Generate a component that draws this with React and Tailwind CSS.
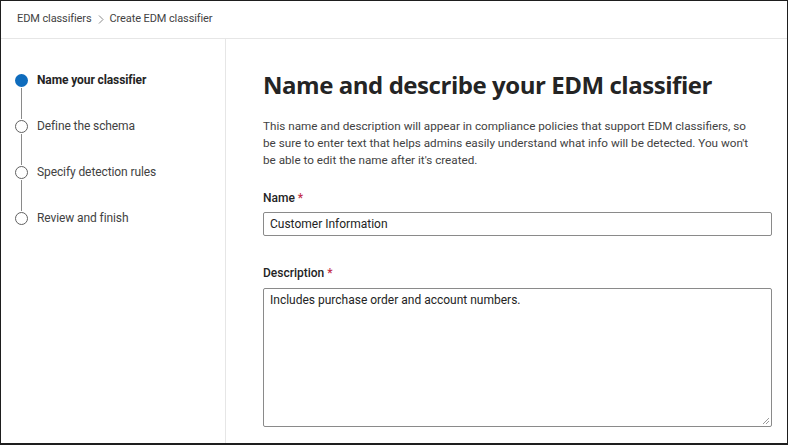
const steps = [
  { label: "Name your classifier", active: true },
  { label: "Define the schema" },
  { label: "Specify detection rules" },
  { label: "Review and finish" },
];

function Step({ label, active, last }) {
  return (
    <div className="flex">
      <div className="flex flex-col items-center w-[13px]">
        <div
          className={
            active
              ? "w-[13px] h-[13px] rounded-full bg-[#0f6cbd]"
              : "w-[13px] h-[13px] rounded-full border border-[#616161] bg-white"
          }
        />
        {!last && <div className="w-px h-[31px] my-[1px] bg-[#8a8a8a]" />}
      </div>
      <div
        className={`ml-[9px] -mt-[3px] text-[12px] leading-[18px] tracking-[-0.1px] ${
          active ? "font-bold text-[#242424]" : "text-[#424242]"
        }`}
      >
        {label}
      </div>
    </div>
  );
}

export default function App() {
  return (
    <div
      className="w-[788px] h-[445px] bg-white border-[#1e1e1e] border-l border-t border-r border-b-2 flex flex-col overflow-hidden"
      style={{ fontFamily: "Roboto, 'Open Sans', sans-serif" }}
    >
      {/* breadcrumb */}
      <header className="h-[38px] flex-shrink-0 border-b border-[#e6e6e6] flex items-center px-[16px] text-[11px] tracking-[-0.1px] text-[#424242]">
        <span>EDM classifiers</span>
        <svg className="mx-[6px]" width="6" height="9" viewBox="0 0 6 9">
          <path d="M1 0.5 L5 4.5 L1 8.5" fill="none" stroke="#8a8a8a" strokeWidth="1" />
        </svg>
        <span>Create EDM classifier</span>
      </header>

      <main className="flex flex-1 overflow-hidden">
        {/* steps */}
        <nav className="w-[225px] flex-shrink-0 border-r border-[#e6e6e6] pl-[14px] pt-[35px]">
          {steps.map((s, i) => (
            <Step key={s.label} {...s} last={i === steps.length - 1} />
          ))}
        </nav>

        {/* form */}
        <section className="flex-1 pl-[37px] pr-[15px] pt-[30px]">
          <h1
            className="text-[24px] leading-[32px] font-bold text-[#242424] tracking-[-0.45px]"
            style={{ fontFamily: "'Open Sans', sans-serif" }}
          >
            Name and describe your EDM classifier
          </h1>
          <p className="mt-[17px] text-[11.7px] leading-[17px] text-[#424242] max-w-[492px]">
            This name and description will appear in compliance policies that support EDM classifiers, so be
            sure to enter text that helps admins easily understand what info will be detected. You won't be able
            to edit the name after it's created.
          </p>

          <label className="block mt-[21px] text-[12px] leading-[16px] font-medium text-[#242424]">
            Name <span className="text-[#c4314b]">*</span>
          </label>
          <div className="mt-[6px] h-[24px] border border-[#8a8a8a] rounded-[2px] flex items-center px-[6px] text-[12px] text-[#242424]">
            Customer Information
          </div>

          <label className="block mt-[29px] text-[12px] leading-[16px] font-medium text-[#242424]">
            Description <span className="text-[#c4314b]">*</span>
          </label>
          <div className="relative mt-[7px] h-[139px] border border-[#8a8a8a] rounded-[2px] px-[6px] pt-[3px] text-[12px] leading-[17px] text-[#242424]">
            Includes purchase order and account numbers.
            <svg className="absolute right-[1px] bottom-[1px]" width="8" height="8" viewBox="0 0 8 8">
              <path d="M7 1 L1 7 M7 4 L4 7" stroke="#9a9a9a" strokeWidth="1" />
            </svg>
          </div>
        </section>
      </main>
    </div>
  );
}
